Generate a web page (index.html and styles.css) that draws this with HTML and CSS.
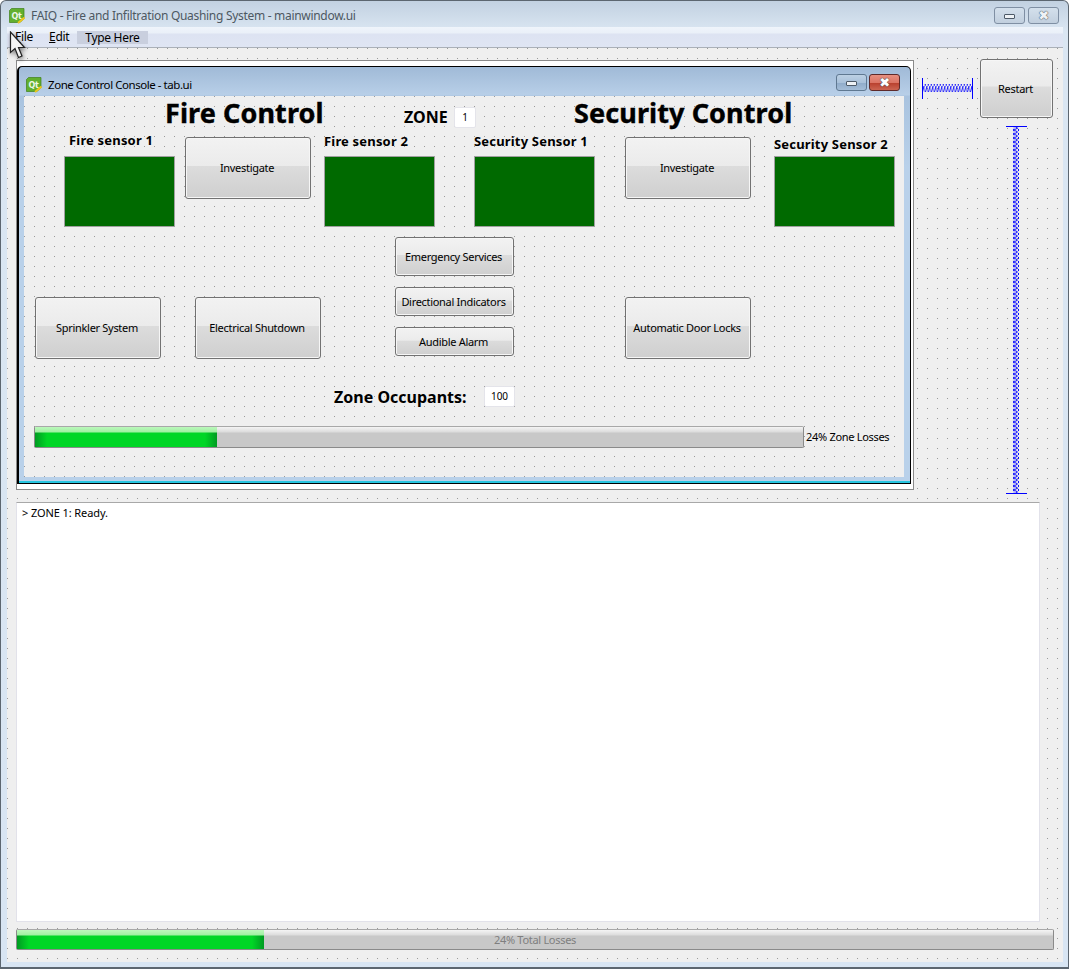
FILE: index.html
```html
<!DOCTYPE html>
<html lang="en">
<head>
    <meta charset="UTF-8">
    <title>FAIQ - Fire and Infiltration Quashing System - mainwindow.ui</title>
    <link rel="stylesheet" href="styles.css">
</head>
<body>
    <svg class="defs" width="0" height="0">
        <defs>
            <symbol id="qtLogo" viewBox="0 0 16 16">
                <path d="M2.5 0.5H15V10.5L11 14.5H0.5V2.5z" fill="#62b02e" stroke="#3f7f1a" stroke-width="0.7"/>
                <text x="2.6" y="10.5" font-family="DejaVu Sans" font-weight="bold" font-size="8" fill="#eef7e6">Qt</text>
                <path d="M9 15L15.5 9.5" stroke="#eec71e" stroke-width="2"/>
            </symbol>
            <pattern id="springH" width="3" height="8" patternUnits="userSpaceOnUse">
                <path d="M0 8L2 0" stroke="#0000ff" stroke-width="0.9"/>
                <path d="M2 0L3 8" stroke="#0000ff" stroke-width="0.4"/>
            </pattern>
            <pattern id="springV" width="6" height="4" patternUnits="userSpaceOnUse">
                <path d="M0 0.5Q5 0.5 5.5 2Q5 3.5 0 3.5" fill="none" stroke="#0000ff" stroke-width="1"/>
            </pattern>
        </defs>
    </svg>

    <div class="main-window">
        <!-- Main window title bar -->
        <div class="title-bar">
            <svg class="app-icon"><use href="#qtLogo"/></svg>
            <span class="title-text">FAIQ - Fire and Infiltration Quashing System - mainwindow.ui</span>
            <div class="window-buttons">
                <div class="win-btn"><span class="min-glyph"></span></div>
                <div class="win-btn"><span class="close-glyph">&#10006;</span></div>
            </div>
        </div>

        <div class="menu-bar">
            <span class="menu-item"><u>F</u>ile</span>
            <span class="menu-item"><u>E</u>dit</span>
            <span class="menu-item menu-new">Type Here</span>
        </div>

        <div class="main-form">
            <div class="top-row">
                <div class="sub-shell">
                    <div class="sub-window">
                        <div class="sub-title">
                            <svg class="app-icon"><use href="#qtLogo"/></svg>
                            <span class="sub-title-text">Zone Control Console - tab.ui</span>
                            <div class="sub-buttons">
                                <div class="sub-btn"><span class="min-glyph"></span></div>
                                <div class="sub-btn sub-close"><span class="close-glyph">&#10006;</span></div>
                            </div>
                        </div>

                        <!-- Zone form, widgets sit where they were dropped in Designer -->
                        <div class="zone-form">
                            <div class="big-label fire-title">Fire Control</div>
                            <div class="big-label security-title">Security Control</div>
                            <div class="mid-label zone-label">ZONE</div>
                            <div class="spin-box zone-box">1</div>

                            <div class="small-label fire-label-1">Fire sensor 1</div>
                            <div class="small-label fire-label-2">Fire sensor 2</div>
                            <div class="small-label sec-label-1">Security Sensor 1</div>
                            <div class="small-label sec-label-2">Security Sensor 2</div>

                            <div class="sensor fire-sensor-1"></div>
                            <div class="sensor fire-sensor-2"></div>
                            <div class="sensor sec-sensor-1"></div>
                            <div class="sensor sec-sensor-2"></div>

                            <button class="push-btn large-btn investigate-fire">Investigate</button>
                            <button class="push-btn large-btn investigate-sec">Investigate</button>
                            <button class="push-btn emergency-btn">Emergency Services</button>
                            <button class="push-btn directional-btn">Directional Indicators</button>
                            <button class="push-btn alarm-btn">Audible Alarm</button>
                            <button class="push-btn large-btn sprinkler-btn">Sprinkler System</button>
                            <button class="push-btn large-btn shutdown-btn">Electrical Shutdown</button>
                            <button class="push-btn large-btn locks-btn">Automatic Door Locks</button>

                            <div class="mid-label occupants-label">Zone Occupants:</div>
                            <div class="spin-box occupants-box">100</div>

                            <div class="progress zone-progress">
                                <div class="progress-chunk zone-chunk"></div>
                            </div>
                            <div class="zone-losses">24% Zone Losses</div>
                        </div>
                    </div>
                </div>

                <div class="side-col">
                    <div class="side-top">
                        <svg class="spacer-h" width="52" height="21">
                            <path d="M0.5 0V21M50.5 0V21" stroke="#0000ff"/>
                            <rect x="1" y="6" width="49" height="8" fill="url(#springH)"/>
                        </svg>
                        <button class="push-btn restart-btn">Restart</button>
                    </div>
                    <svg class="spacer-v" width="21" height="369">
                        <path d="M0 0.5H21M0 367.5H21" stroke="#0000ff"/>
                        <rect x="7" y="1" width="6" height="366" fill="url(#springV)"/>
                    </svg>
                </div>
            </div>

            <div class="log-box">&gt; ZONE 1: Ready.</div>

            <div class="progress total-progress">
                <div class="progress-chunk total-chunk"></div>
                <span class="total-text">24% Total Losses</span>
            </div>
        </div>
    </div>

    <!-- Mouse pointer caught in the screenshot -->
    <svg class="pointer" width="22" height="32" viewBox="0 0 22 32">
        <path d="M1.5 1V21.5L6 17.5L9.5 26.5L13 25L9.5 16.5L15.5 16.5Z" fill="#f4f4f4" stroke="#222" stroke-width="1.2"/>
    </svg>
</body>
</html>
```

FILE: styles.css
```css
/* Page */
body {
    margin: 0;
    width: 1071px;
    height: 969px;
    overflow: hidden;
    background-color: #fff;
    font-family: "Noto Sans", sans-serif;
    font-size: 11px;
    letter-spacing: -0.3px;
    color: #000;
}

.defs {
    position: absolute;
}

/* Main window frame */
.main-window {
    box-sizing: border-box;
    width: 1069px;
    height: 969px;
    padding: 0 5px 5px 6px;
    border: 1px solid #5c6670;
    border-bottom-width: 2px;
    border-radius: 6px 6px 0 0;
    background: linear-gradient(#c2d1e1 0, #dae6f2 30px, #d8e5f3 100%);
    display: flex;
    flex-direction: column;
}

.title-bar {
    height: 26px;
    flex: none;
    display: flex;
    align-items: center;
}

.app-icon {
    width: 16px;
    height: 16px;
    flex: none;
}

.title-bar .app-icon {
    margin: 4px 0 0 2px;
}

.title-text {
    margin: 3px 0 0 6px;
    font-size: 12px;
    color: #4d5862;
}

.window-buttons {
    margin-left: auto;
    margin-right: 4px;
    margin-top: 3px;
    display: flex;
    gap: 3px;
}

.win-btn {
    box-sizing: border-box;
    width: 31px;
    height: 17px;
    border: 1px solid #7f8fa3;
    border-radius: 3px;
    background: linear-gradient(#d4e0ec, #c1cfde);
    display: flex;
    align-items: center;
    justify-content: center;
}

.min-glyph {
    box-sizing: border-box;
    width: 11px;
    height: 5px;
    margin-top: 2px;
    border: 1px solid #4d5a68;
    border-radius: 1px;
    background-color: #eef2f6;
}

.close-glyph {
    font-size: 13px;
    line-height: 1;
    color: #eef2f6;
    text-shadow: 0 0 1px #3c4650, 0 0 1px #3c4650;
    font-family: "DejaVu Sans", sans-serif;
}

/* Menu bar */
.menu-bar {
    height: 21px;
    flex: none;
    box-sizing: border-box;
    padding: 2px 0 0 8px;
    border-bottom: 1px solid #aab0b8;
    background: linear-gradient(#eff4fb 0, #eaf0f8 6px, #dde3f2 7px, #dfe5f3 100%);
    display: flex;
    font-size: 12px;
    line-height: 15px;
}

.menu-item {
    margin-right: 16px;
}

.menu-new {
    margin: 2px 0 0 -8px;
    padding: 0 8px;
    height: 13px;
    line-height: 13px;
    background-color: #c9cfde;
}

/* Main form canvas */
.main-form {
    flex: 1;
    box-sizing: border-box;
    padding: 12px 9px 0 9px;
    background-color: #efefef;
    background-image: radial-gradient(circle at 0.5px 0.5px, #9a9a9a 0.5px, transparent 0.55px);
    background-size: 10px 10px;
    display: flex;
    flex-direction: column;
}

.top-row {
    height: 430px;
    display: flex;
    align-items: flex-start;
}

/* Sub window */
.sub-shell {
    box-sizing: border-box;
    width: 898px;
    height: 430px;
    padding: 5px 2px 5px 0;
    border: 1px solid #8a8a8a;
    background-color: #fff;
    flex: none;
}

.sub-window {
    box-sizing: border-box;
    height: 418px;
    border: 1px solid #000;
    border-left-width: 2px;
    border-radius: 5px 5px 0 0;
    background: linear-gradient(#a0bad7 0, #b8cfe8 28px, #a9c3df 29px, #b9d1ea 100px);
    display: flex;
    flex-direction: column;
    padding: 0 6px 6px 5px;
    box-shadow: inset 0 -2px 0 #27c5e0;
}

.sub-title {
    height: 29px;
    flex: none;
    display: flex;
    align-items: center;
}

.sub-title .app-icon {
    margin: 6px 0 0 2px;
}

.sub-title-text {
    margin: 6px 0 0 6px;
    font-size: 11.5px;
    letter-spacing: -0.45px;
}

.sub-buttons {
    margin-left: auto;
    margin-right: 4px;
    margin-top: 2px;
    display: flex;
    gap: 2px;
}

.sub-btn {
    box-sizing: border-box;
    width: 31px;
    height: 17px;
    border: 1px solid #5f7891;
    border-radius: 3px;
    background: linear-gradient(#bcd0e4 0, #a9c1da 50%, #8fabc9 51%, #a4bdd8 100%);
    display: flex;
    align-items: center;
    justify-content: center;
}

.sub-close {
    border-color: #5e2a2a;
    background: linear-gradient(#e68f80 0, #dc7565 50%, #b83e2c 51%, #cc6552 100%);
}

.sub-close .close-glyph {
    color: #fff;
}

/* Zone form: free canvas */
.zone-form {
    position: relative;
    flex: 1;
    background-color: #efefef;
    background-image: radial-gradient(circle at 0.5px 0.5px, #9a9a9a 0.5px, transparent 0.55px);
    background-size: 10px 10px;
}

.big-label {
    position: absolute;
    top: -1px;
    font-family: "Noto Sans", sans-serif;
    font-weight: bold;
    font-size: 27px;
    line-height: 35px;
    letter-spacing: 0.1px;
    -webkit-text-stroke: 0.4px #000;
    white-space: nowrap;
}

.fire-title { left: 141px; }
.security-title { left: 550px; }

.mid-label {
    position: absolute;
    font-weight: bold;
    font-size: 16px;
    line-height: 20px;
    letter-spacing: 0;
    white-space: nowrap;
}

.zone-label { left: 380px; top: 11px; }
.occupants-label { left: 310px; top: 291px; }

.small-label {
    position: absolute;
    font-weight: bold;
    font-size: 13px;
    line-height: 16px;
    letter-spacing: 0.18px;
    white-space: nowrap;
}

.fire-label-1 { left: 45px; top: 36px; }
.fire-label-2 { left: 300px; top: 37px; }
.sec-label-1 { left: 450px; top: 37px; }
.sec-label-2 { left: 750px; top: 40px; }

.spin-box {
    position: absolute;
    box-sizing: border-box;
    height: 21px;
    line-height: 19px;
    font-size: 10px;
    letter-spacing: 0;
    text-align: center;
    background-color: #fff;
    border: 1px solid #e4e4ea;
    border-radius: 2px;
}

.zone-box { left: 430px; top: 11px; width: 22px; }
.occupants-box { left: 460px; top: 290px; width: 31px; }

/* Sensor lights */
.sensor {
    position: absolute;
    top: 60px;
    box-sizing: border-box;
    height: 71px;
    background-color: #006a00;
    border: 1px solid #a0a0a0;
}

.fire-sensor-1 { left: 40px; width: 111px; }
.fire-sensor-2 { left: 300px; width: 111px; }
.sec-sensor-1 { left: 450px; width: 121px; }
.sec-sensor-2 { left: 750px; width: 121px; }

/* Push buttons */
.push-btn {
    box-sizing: border-box;
    padding: 0 2px 0 0;
    font-family: "Noto Sans", sans-serif;
    font-size: 11px;
    letter-spacing: -0.3px;
    color: #000;
    border: 1px solid #727272;
    border-radius: 3px;
    box-shadow: inset 0 0 0 1px #f6f6f6;
    background: linear-gradient(#f2f2f2 0, #ebebeb 46%, #dcdcdc 47%, #cfcfcf 100%);
}

.large-btn {
    padding-bottom: 2px;
}

.zone-form .push-btn {
    position: absolute;
}

.investigate-fire { left: 161px; top: 41px; width: 126px; height: 62px; }
.investigate-sec { left: 601px; top: 41px; width: 126px; height: 62px; }
.emergency-btn { left: 371px; top: 141px; width: 119px; height: 39px; }
.directional-btn { left: 371px; top: 191px; width: 119px; height: 29px; }
.alarm-btn { left: 371px; top: 231px; width: 119px; height: 29px; }
.sprinkler-btn { left: 11px; top: 201px; width: 126px; height: 62px; }
.shutdown-btn { left: 171px; top: 201px; width: 126px; height: 62px; }
.locks-btn { left: 601px; top: 201px; width: 126px; height: 62px; }

/* Progress bars */
.progress {
    box-sizing: border-box;
    border: 1px solid #8a8a8a;
    border-top-color: #a8a8a8;
    border-radius: 2px;
    background: linear-gradient(#f4f4f4 0, #dcdcdc 5px, #c8c8c8 6px, #c8c8c8 100%);
    position: relative;
}

.progress-chunk {
    height: 100%;
    background:
        linear-gradient(#bcf8bc 0, #a0f0a2 5px, transparent 6px),
        linear-gradient(90deg, #009b22 0, #00d626 12px, #00d626 calc(100% - 12px), #009b22 100%);
}

.zone-progress {
    position: absolute;
    left: 10px;
    top: 330px;
    width: 770px;
    height: 22px;
}

.zone-chunk { width: 182px; }

.zone-losses {
    position: absolute;
    left: 782px;
    top: 333px;
    line-height: 16px;
    white-space: nowrap;
}

.total-progress {
    margin-top: 7px;
    width: 1038px;
    height: 21px;
}

.total-chunk { width: 247px; }

.total-text {
    position: absolute;
    left: 0;
    right: 0;
    top: 2px;
    text-align: center;
    line-height: 16px;
    color: #7f7f7f;
}

/* Right hand column */
.side-col {
    margin-left: 8px;
    flex: none;
}

.side-top {
    display: flex;
}

.spacer-h {
    margin-top: 18px;
    margin-right: 6px;
    flex: none;
}

.restart-btn {
    width: 73px;
    height: 59px;
    margin-top: -1px;
}

.spacer-v {
    display: block;
    margin: 8px 0 0 84px;
}

/* Log */
.log-box {
    box-sizing: border-box;
    margin-top: 12px;
    width: 1024px;
    height: 420px;
    padding: 2px 5px;
    line-height: 16px;
    letter-spacing: -0.1px;
    background-color: #fff;
    border: 1px solid #e2e2ea;
    border-top-color: #a8a8a8;
}

/* Pointer */
.pointer {
    position: absolute;
    left: 9px;
    top: 31px;
    filter: drop-shadow(1px 2px 2px rgba(0, 0, 0, 0.45));
}
```
